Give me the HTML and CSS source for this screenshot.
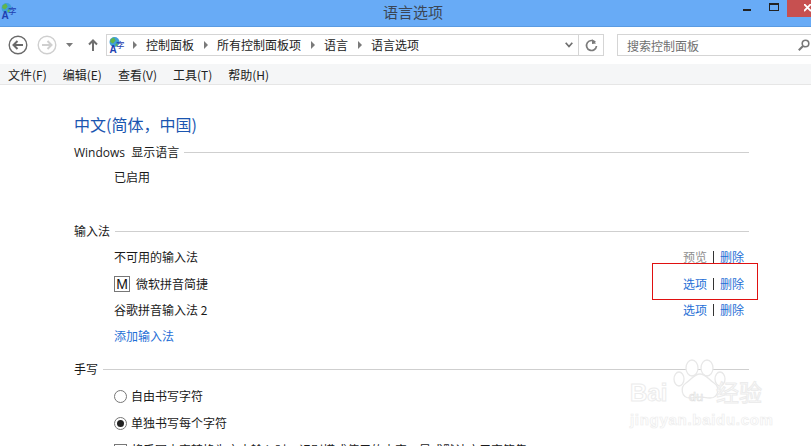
FILE: index.html
```html
<!DOCTYPE html>
<html lang="zh-CN">
<head>
<meta charset="utf-8">
<title>语言选项</title>
<link rel="stylesheet" href="styles.css">
</head>
<body>
<div class="window">
  <header class="titlebar">
    <svg class="app-icon" width="18" height="16" viewBox="0 0 18 16">
      <circle cx="6.5" cy="5" r="5" fill="#3f9fd8"/>
      <path d="M2.6 2.2 6 .5 7.6 3.4 5 6.6 2.2 5Z" fill="#62b54a"/>
      <path d="M7.5 7l1.6-.8.5 2L7.8 9.4Z" fill="#62b54a"/>
      <text class="icon-a" x="1.5" y="16">A</text>
      <text class="icon-zi" x="8" y="10.5">字</text>
    </svg>
    <span class="title">语言选项</span>
    <div class="win-buttons">
      <span class="win-btn"><i class="min-glyph"></i></span>
      <span class="win-btn"><i class="max-glyph"></i></span>
      <span class="win-btn close"><svg width="8" height="8" viewBox="0 0 8 8"><path d="M0 0 7 7M7 0 0 7" stroke="#fff" stroke-width="1.8"/></svg></span>
    </div>
  </header>

  <div class="toolbar">
    <svg class="nav-btn" width="20" height="20" viewBox="0 0 20 20">
      <circle cx="10" cy="10" r="8.8" fill="#fff" stroke="#6a6a6a" stroke-width="1.4"/>
      <path d="M15 10H6M9.5 6 5.5 10l4 4" fill="none" stroke="#6a6a6a" stroke-width="2"/>
    </svg>
    <svg class="nav-btn" width="20" height="20" viewBox="0 0 20 20">
      <circle cx="10" cy="10" r="8.8" fill="#fff" stroke="#cfcfcf" stroke-width="1.4"/>
      <path d="M5 10h9M10.5 6l4 4-4 4" fill="none" stroke="#cfcfcf" stroke-width="2"/>
    </svg>
    <svg class="drop" width="7" height="4" viewBox="0 0 7 4"><path d="M0 0h7L3.5 4Z" fill="#7a7a7a"/></svg>
    <svg class="up" width="10" height="12" viewBox="0 0 10 12"><path d="M5 12V1.5M1 5.5l4-4 4 4" fill="none" stroke="#6f6f6f" stroke-width="2"/></svg>
    <div class="address">
      <svg class="app-icon small" width="18" height="16" viewBox="0 0 18 16">
        <circle cx="6.5" cy="5" r="5" fill="#3f9fd8"/>
        <path d="M2.6 2.2 6 .5 7.6 3.4 5 6.6 2.2 5Z" fill="#62b54a"/>
        <path d="M7.5 7l1.6-.8.5 2L7.8 9.4Z" fill="#62b54a"/>
        <text class="icon-a" x="1.5" y="16">A</text>
        <text class="icon-zi" x="8" y="10.5">字</text>
      </svg>
      <i class="crumb-arrow"></i><span>控制面板</span>
      <i class="crumb-arrow"></i><span>所有控制面板项</span>
      <i class="crumb-arrow"></i><span>语言</span>
      <i class="crumb-arrow"></i><span>语言选项</span>
      <svg class="chev" width="8" height="6" viewBox="0 0 8 6"><path d="M.7.7 4 4.5 7.3.7" fill="none" stroke="#6f6f6f" stroke-width="1.7"/></svg>
      <span class="refresh">
        <svg width="13" height="13" viewBox="0 0 13 13"><path d="M10.3 3.2A5 5 0 1 0 11.5 7" fill="none" stroke="#7a7a7a" stroke-width="1.7"/><path d="M7 0v5l4-.6Z" fill="#7a7a7a"/></svg>
      </span>
    </div>
    <div class="search">
      <span>搜索控制面板</span>
      <svg width="12" height="12" viewBox="0 0 12 12"><circle cx="7.5" cy="4.5" r="3.3" fill="none" stroke="#777" stroke-width="1.6"/><path d="M5 7 .8 11.2" stroke="#777" stroke-width="2"/></svg>
    </div>
  </div>

  <nav class="menubar">
    <span>文件(F)</span><span>编辑(E)</span><span>查看(V)</span><span>工具(T)</span><span>帮助(H)</span>
  </nav>

  <main class="content">
    <h1 class="lang-title">中文(简体，中国)</h1>
    <div class="section-head first"><span>Windows 显示语言</span><i></i></div>
    <div class="row status"><span>已启用</span></div>

    <div class="section-head ime"><span>输入法</span><i></i></div>
    <div class="row r1">
      <span>不可用的输入法</span>
      <span class="actions"><a class="muted">预览</a><b></b><a>删除</a></span>
    </div>
    <div class="row r2">
      <span class="ime-name"><i class="m-box">M</i>微软拼音简捷</span>
      <span class="actions"><a>选项</a><b></b><a>删除</a></span>
      <i class="highlight"></i>
    </div>
    <div class="row r3">
      <span>谷歌拼音输入法 2</span>
      <span class="actions"><a>选项</a><b></b><a>删除</a></span>
    </div>
    <div class="row r4"><a>添加输入法</a></div>

    <div class="section-head hand"><span>手写</span><i></i></div>
    <label class="row choice c1"><i class="radio"></i>自由书写字符</label>
    <label class="row choice c2"><i class="radio on"></i>单独书写每个字符</label>
    <label class="row choice c3"><i class="check"></i>将手写内容转换为文本输入时，识别模式使用的内容，是或默认应用字符集</label>
  </main>

  <div class="watermark" aria-hidden="true">
    <svg width="68" height="46" viewBox="0 0 68 46">
      <g fill="#fff" stroke="#e8e8e8" stroke-width="1.3">
        <ellipse cx="22" cy="9" rx="6" ry="8"/><ellipse cx="37" cy="9" rx="6" ry="8"/>
        <ellipse cx="9" cy="20" rx="5" ry="7"/><ellipse cx="50" cy="20" rx="5" ry="7"/>
        <path d="M30 15c-6 0-9 6-14 9-6 4-5 15 4 15 4 0 7-1 10-1s6 1 10 1c9 0 10-11 4-15-5-3-8-9-14-9Z"/>
      </g>
    </svg>
    <div class="wm-brand"><span class="wm-bai">Bai</span><span class="wm-du">du</span><span class="wm-cn">经验</span></div>
    <div class="wm-url">jingyan.baidu.com</div>
  </div>
</div>
</body>
</html>
```

FILE: styles.css
```css
* { box-sizing: border-box; }
html, body { margin: 0; padding: 0; height: 100%; overflow: hidden; background: #fff; }
body { font-family: "Noto Sans CJK SC", "Liberation Sans", sans-serif; font-size: 12px; color: #1a1a1a; }
i { font-style: normal; }

.window { position: relative; width: 811px; height: 446px; overflow: hidden; }

.titlebar { height: 27px; background: #68abf6; border-bottom: 1px solid #5a9be2; display: flex; align-items: flex-start; position: relative; }
.app-icon { flex: none; margin: 3px 0 0 0; }
.icon-a { font-family: "Liberation Sans", sans-serif; font-size: 10px; font-weight: 700; fill: #1f3fb0; }
.icon-zi { font-family: "Noto Sans CJK SC", sans-serif; font-size: 8.5px; fill: #1f3fb0; }
.title { position: absolute; left: 15px; right: 0; top: 2px; text-align: center; font-size: 15px; line-height: 20px; color: #3b4655; }
.win-buttons { margin-left: auto; display: flex; height: 17px; position: relative; }
.win-btn { width: 27px; height: 17px; display: flex; align-items: center; justify-content: center; }
.min-glyph { display: block; width: 8px; height: 2px; background: #222; margin-top: 3px; }
.max-glyph { display: block; width: 10px; height: 8px; border: 1px solid #222; border-top-width: 2px; margin-top: -3px; }
.win-btn.close { width: 24px; background: #c75050; justify-content: flex-end; overflow: hidden; }
.win-btn.close svg { margin-right: -1px; margin-top: -2px; flex: none; }

.toolbar { height: 37px; padding: 0 0 1px 8px; background: #fff; display: flex; align-items: center; }
.nav-btn { flex: none; margin-right: 9px; }
.nav-btn + .nav-btn { margin-right: 8px; }
.drop { flex: none; margin-left: 1px; }
.up { flex: none; margin-left: 15px; }
.address { flex: none; margin-left: 8px; width: 498px; height: 22px; border: 1px solid #d5d5d5; display: flex; align-items: center; line-height: 20px; color: #222; }
.address .app-icon.small { margin: 0 0 0 1px; }
.crumb-arrow { flex: none; width: 0; height: 0; border-left: 4px solid #7a7a7a; border-top: 4px solid transparent; border-bottom: 4px solid transparent; margin: 0 9px 0 10px; }
.address .app-icon + .crumb-arrow { margin-left: 7px; }
.chev { margin-left: auto; margin-right: 5px; flex: none; }
.refresh { flex: none; width: 25px; height: 20px; border-left: 1px solid #d5d5d5; display: flex; align-items: center; justify-content: center; }
.search { margin-left: 13px; flex: 1; height: 22px; border: 1px solid #d5d5d5; border-right: 0; display: flex; align-items: center; justify-content: space-between; padding: 0 1px 0 9px; color: #6f6f6f; }

.menubar { height: 21px; background: #f5f6f7; border-bottom: 1px solid #e6e6e6; display: flex; align-items: center; padding-left: 8px; gap: 16px; color: #222; }

.content { padding: 0 62px 0 74px; }
.lang-title { margin: 0; padding-top: 28px; font-size: 16px; font-weight: 400; line-height: 22px; color: #1a55b0; }
.section-head { display: flex; align-items: center; gap: 5px; line-height: 18px; height: 18px; font-family: "Open Sans", "Noto Sans CJK SC", sans-serif; word-spacing: 3px; }
.section-head span { padding-top: 2px; }
.section-head i { flex: 1; height: 1px; background: #cfcfcf; }
.section-head.first { margin-top: 8px; }
.section-head.ime { margin-top: 36px; }
.section-head.hand { margin-top: 15px; }
.row { position: relative; margin-left: 40px; height: 18px; line-height: 18px; display: flex; justify-content: space-between; align-items: center; }
.status { margin-top: 7px; }
.r1 { margin-top: 8px; }
.r2 { margin-top: 9px; }
.r3 { margin-top: 8px; }
.r4 { margin-top: 8px; }
a { color: #1f6fd6; }
a.muted { color: #8f8f8f; }
.actions { display: flex; align-items: center; padding-right: 5px; }
.actions b { display: block; width: 1px; height: 12px; background: #333; margin: 0 6px; }
.ime-name { display: flex; align-items: center; }
.m-box { width: 16px; height: 16px; border: 1px solid #777; display: flex; align-items: center; justify-content: center; margin-right: 6px; font-family: "Liberation Sans", sans-serif; font-size: 14px; color: #111; }
.highlight { position: absolute; right: -9px; top: -12px; width: 106px; height: 37px; border: 1px solid #e01010; }

.choice { justify-content: flex-start; white-space: nowrap; }
.c1 { margin-top: 9px; }
.c2 { margin-top: 9px; }
.c3 { margin-top: 9px; }
.radio { position: relative; flex: none; width: 13px; height: 13px; border: 1px solid #777; border-radius: 50%; margin-right: 4px; background: #fff; }
.radio.on::after { content: ""; position: absolute; left: 2px; top: 2px; width: 7px; height: 7px; border-radius: 50%; background: #222; }
.check { flex: none; width: 13px; height: 13px; border: 1px solid #777; margin-right: 4px; }

.watermark { position: absolute; left: 630px; top: 359px; width: 140px; height: 80px; }
.watermark svg { position: absolute; left: 40px; top: 0; }
.wm-brand { position: absolute; left: 0; top: 20px; display: flex; align-items: baseline; font-family: "Liberation Sans", sans-serif; line-height: 24px; white-space: nowrap; color: #fff; -webkit-text-stroke: 1px #ececec; }
.wm-bai { font-size: 24px; width: 46px; font-weight: 700; }
.wm-du { font-size: 13px; width: 40px; text-align: center; -webkit-text-stroke: .6px #e0e0e0; }
.wm-cn { font-family: "Noto Sans CJK SC", sans-serif; font-size: 23px; }
.wm-url { position: absolute; left: 0; top: 53px; font-family: "Liberation Sans", sans-serif; font-size: 15px; font-weight: 700; line-height: 16px; letter-spacing: .7px; white-space: nowrap; color: #fff; -webkit-text-stroke: .7px #ededed; }
```
